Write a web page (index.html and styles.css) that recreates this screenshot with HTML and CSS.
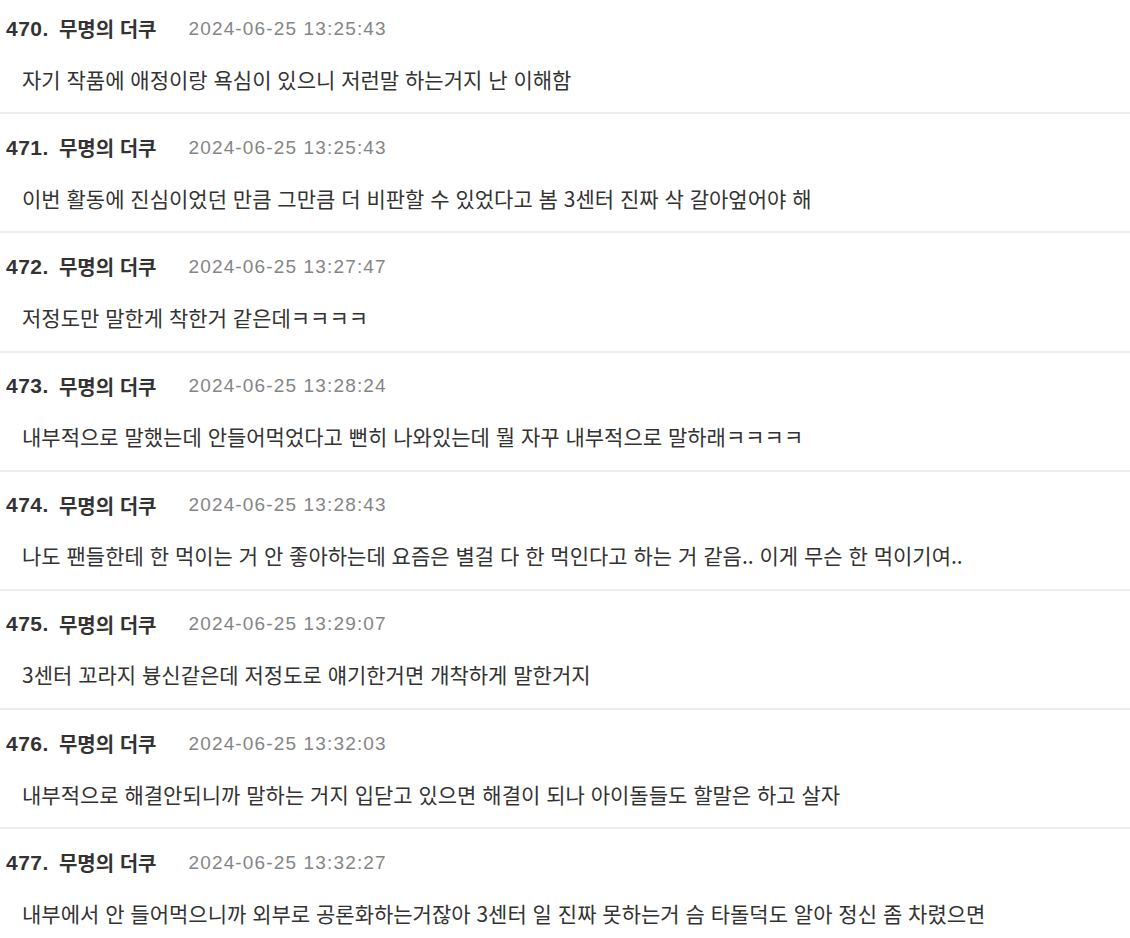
FILE: index.html
```html
<!DOCTYPE html>
<html lang="ko">
<head>
<meta charset="utf-8">
<link rel="stylesheet" href="styles.css">
</head>
<body>
<div class="list">
  <div class="item">
    <div class="head"><span class="name"><span class="num">470.</span><span class="nick">무명의 더쿠</span></span><span class="date">2024-06-25 13:25:43</span></div>
    <div class="text">자기 작품에 애정이랑 욕심이 있으니 저런말 하는거지 난 이해함</div>
  </div>
  <div class="item">
    <div class="head"><span class="name"><span class="num">471.</span><span class="nick">무명의 더쿠</span></span><span class="date">2024-06-25 13:25:43</span></div>
    <div class="text">이번 활동에 진심이었던 만큼 그만큼 더 비판할 수 있었다고 봄 3센터 진짜 삭 갈아엎어야 해</div>
  </div>
  <div class="item">
    <div class="head"><span class="name"><span class="num">472.</span><span class="nick">무명의 더쿠</span></span><span class="date">2024-06-25 13:27:47</span></div>
    <div class="text">저정도만 말한게 착한거 같은데ㅋㅋㅋㅋ</div>
  </div>
  <div class="item">
    <div class="head"><span class="name"><span class="num">473.</span><span class="nick">무명의 더쿠</span></span><span class="date">2024-06-25 13:28:24</span></div>
    <div class="text">내부적으로 말했는데 안들어먹었다고 뻔히 나와있는데 뭘 자꾸 내부적으로 말하래ㅋㅋㅋㅋ</div>
  </div>
  <div class="item">
    <div class="head"><span class="name"><span class="num">474.</span><span class="nick">무명의 더쿠</span></span><span class="date">2024-06-25 13:28:43</span></div>
    <div class="text">나도 팬들한테 한 먹이는 거 안 좋아하는데 요즘은 별걸 다 한 먹인다고 하는 거 같음.. 이게 무슨 한 먹이기여..</div>
  </div>
  <div class="item">
    <div class="head"><span class="name"><span class="num">475.</span><span class="nick">무명의 더쿠</span></span><span class="date">2024-06-25 13:29:07</span></div>
    <div class="text">3센터 꼬라지 븅신같은데 저정도로 얘기한거면 개착하게 말한거지</div>
  </div>
  <div class="item">
    <div class="head"><span class="name"><span class="num">476.</span><span class="nick">무명의 더쿠</span></span><span class="date">2024-06-25 13:32:03</span></div>
    <div class="text">내부적으로 해결안되니까 말하는 거지 입닫고 있으면 해결이 되나 아이돌들도 할말은 하고 살자</div>
  </div>
  <div class="item">
    <div class="head"><span class="name"><span class="num">477.</span><span class="nick">무명의 더쿠</span></span><span class="date">2024-06-25 13:32:27</span></div>
    <div class="text">내부에서 안 들어먹으니까 외부로 공론화하는거잖아 3센터 일 진짜 못하는거 슴 타돌덕도 알아 정신 좀 차렸으면</div>
  </div>
</div>
</body>
</html>
```

FILE: styles.css
```css
html, body {
  margin: 0;
  padding: 0;
  background: #ffffff;
}
body {
  font-family: "Noto Sans CJK KR", "Noto Sans", sans-serif;
  color: #333333;
}
.list {
  margin-top: -5px;
}
.item {
  height: 117.2px;
  border-bottom: 2px solid #ededed;
  display: flex;
  flex-direction: column;
}
.head {
  display: flex;
  align-items: center;
  height: 22px;
  margin-top: 22.5px;
  padding-left: 6px;
}
.name {
  display: flex;
  align-items: center;
  font-weight: 700;
  color: #333333;
}
.num {
  font-family: "Liberation Sans", "Noto Sans CJK KR", sans-serif;
  font-size: 21px;
  letter-spacing: 0.5px;
}
.nick {
  font-family: "Noto Sans CJK KR", sans-serif;
  font-size: 20px;
  margin-left: 10px;
}
.date {
  font-family: "Liberation Sans", "Noto Sans CJK KR", sans-serif;
  font-size: 19px;
  letter-spacing: 1.15px;
  color: #858585;
  margin-left: 32px;
}
.text {
  margin-top: 27px;
  padding-left: 22px;
  font-size: 21px;
  line-height: 24px;
  color: #333333;
}
```
